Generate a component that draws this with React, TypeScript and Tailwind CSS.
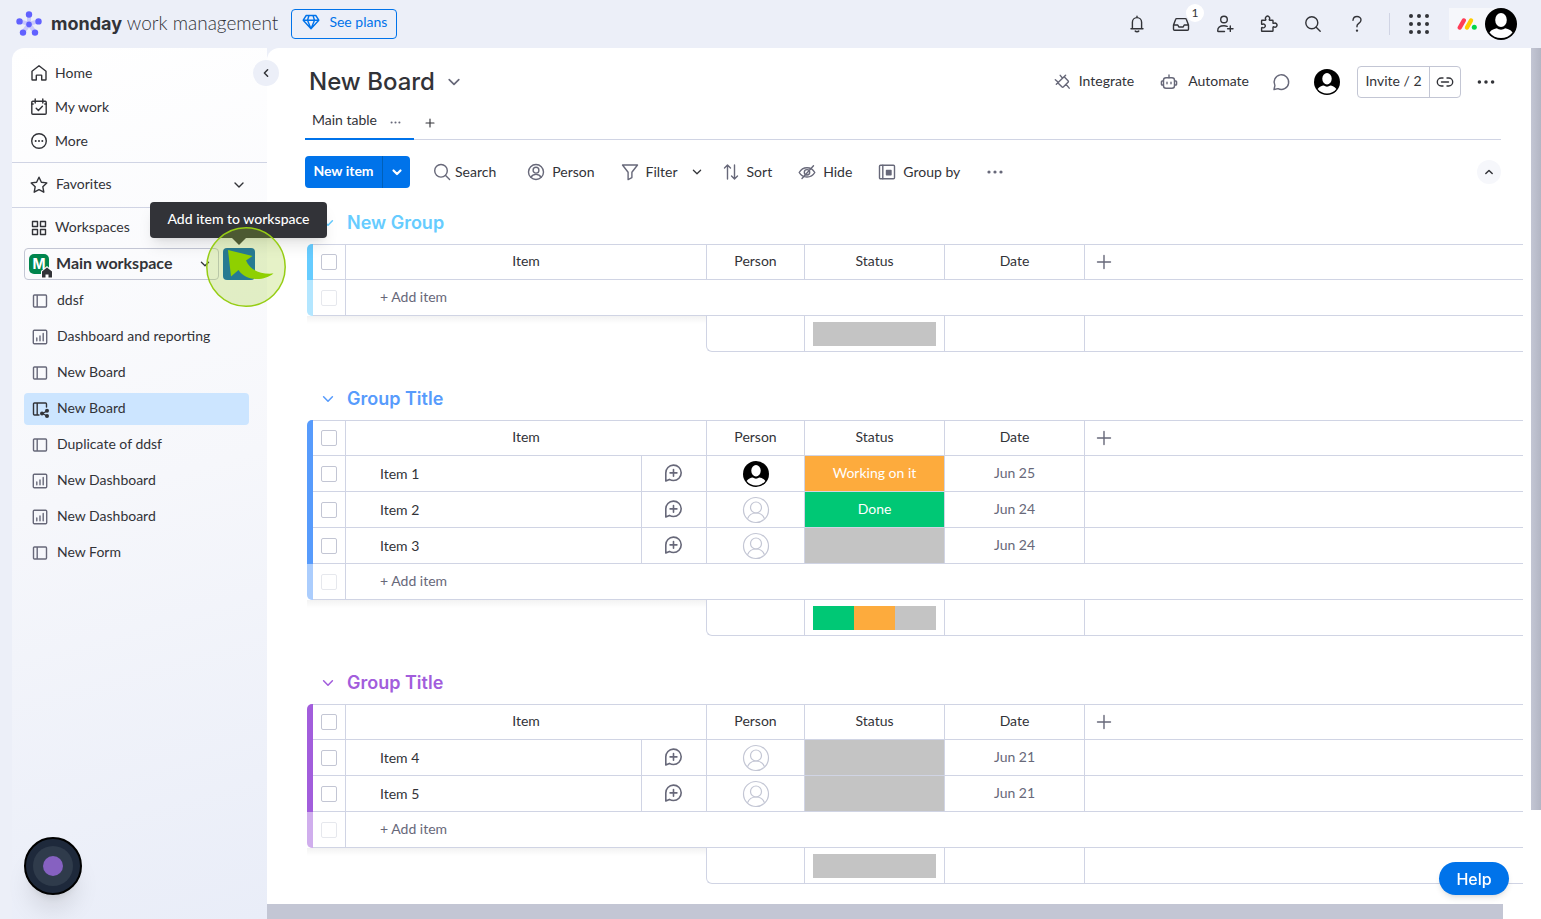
import React, { useState } from 'react';

type IconProps = { className?: string; children?: React.ReactNode };

const Icon = ({ className = 'size-5', children }: IconProps) => (
  <svg viewBox="0 0 20 20" fill="none" stroke="currentColor" strokeWidth="1.4" strokeLinecap="round" strokeLinejoin="round" className={`shrink-0 ${className}`} aria-hidden="true">
    {children}
  </svg>
);

const HomeIcon = () => (
  <Icon>
    <path d="M3 8.2 10 2.8l7 5.4v8.3c0 .3-.2.5-.5.5h-3.800v-4.400c0-.3-.2-.5-.5-.5H7.800c-.3 0-.5.2-.5.5V17H3.500a.5.5 0 0 1-.5-.5z" />
  </Icon>
);

const MyWorkIcon = () => (
  <Icon>
    <rect x="2.8" y="4.2" width="14.4" height="13" rx="1" />
    <path d="M6.2 2v4M13.8 2v4M2.8 7h1.4M15.8 7h1.4M7.2 11.2l2.2 2.2 4-4.2" />
  </Icon>
);

const MoreIcon = () => (
  <Icon>
    <circle cx="10" cy="10" r="7.3" />
    <g fill="currentColor" stroke="none">
      <circle cx="6.7" cy="10" r="1" />
      <circle cx="10" cy="10" r="1" />
      <circle cx="13.3" cy="10" r="1" />
    </g>
  </Icon>
);

const StarIcon = () => (
  <Icon>
    <path d="m10 2.2 2.4 5 5.4.7-4 3.8 1 5.5L10 14.6l-4.8 2.6 1-5.5-4-3.8 5.4-.7z" />
  </Icon>
);

const WorkspacesIcon = () => (
  <Icon>
    <path d="M3.5 3.5h5v5h-5zM11.5 3.5h5v5h-5zM3.5 11.5h5v5h-5zM11.5 11.5h5v5h-5z" />
  </Icon>
);

const ChevronDown = ({ className = 'size-5' }: IconProps) => (
  <Icon className={className}>
    <path d="m6 8 4 4 4-4" />
  </Icon>
);

const BoardIcon = () => (
  <Icon className="size-5 text-[#676879]">
    <path d="M4.4 4h11.2a.9.9 0 0 1 .9.9v10.2a.9.9 0 0 1-.9.9H4.4a.9.9 0 0 1-.9-.9V4.9a.9.9 0 0 1 .9-.9zM7.2 4v12" />
  </Icon>
);

const SharedBoardIcon = () => (
  <Icon className="size-5 text-[#323338]">
    <path d="M9 16H4.4a.9.9 0 0 1-.9-.9V4.9a.9.9 0 0 1 .9-.9h11.2a.9.9 0 0 1 .9.9V8M7.2 4v12M17 12l-4.5 2.5 4.5 2.5" />
    <g fill="currentColor" stroke="none">
      <circle cx="12" cy="14.5" r="2" />
      <circle cx="17" cy="11.8" r="2" />
      <circle cx="17" cy="17" r="2" />
    </g>
  </Icon>
);

const DashboardIcon = () => (
  <Icon className="size-5 text-[#676879]">
    <rect x="3.3" y="3.3" width="13.4" height="13.4" rx="1" />
    <path d="M6.8 11v2.7M10 9v4.7M13.2 6.5v7.2" />
  </Icon>
);

const DotsIcon = ({ className = 'size-5' }: IconProps) => (
  <Icon className={className}>
    <g fill="currentColor" stroke="none">
      <circle cx="4" cy="10" r="1.6" />
      <circle cx="10" cy="10" r="1.6" />
      <circle cx="16" cy="10" r="1.6" />
    </g>
  </Icon>
);

const SearchIcon = ({ className = 'size-5' }: IconProps) => (
  <Icon className={className}>
    <circle cx="9" cy="8.8" r="6.3" />
    <path d="m13.6 13.4 4 4" />
  </Icon>
);

const Avatar = ({ className = 'size-[26px]' }: IconProps) => (
  <svg viewBox="0 0 32 32" className={`shrink-0 ${className}`} aria-hidden="true">
    <circle cx="16" cy="16" r="16" fill="#000" />
    <ellipse cx="16" cy="12" rx="5.8" ry="7" fill="#fff" />
    <path d="M4.5 24.5C6.5 21.5 9.5 20.8 12 20.3c1.2 1 2.6 1.4 4 1.4s2.8-.4 4-1.4c2.5.5 5.5 1.2 7.5 4.2a14.6 14.6 0 0 1-23 0z" fill="#fff" />
  </svg>
);

const EmptyPerson = () => (
  <svg viewBox="0 0 28 28" fill="none" stroke="#c3c6d4" strokeWidth="1.2" className="size-7" aria-hidden="true">
    <circle cx="14" cy="14" r="12.5" />
    <circle cx="14" cy="11.5" r="5.5" />
    <path d="M5.5 22.8c1.5-3.8 4.5-5.8 8.5-5.8s7 2 8.5 5.8" />
  </svg>
);

const ChatPlusIcon = () => (
  <Icon className="size-5 text-[#676879]">
    <path d="M1.8 17V9A7.7 7.7 0 1 1 9.500 16.500c-1.500 0-2.900-.4-4.100-1.100zM9.500 5.500v6.800M6.100 8.900h6.800" strokeWidth="1.6" />
  </Icon>
);

const ChatIcon = () => (
  <Icon className="size-5 text-[#676879]">
    <path d="M3 17.500l.9-4A7.300 7.300 0 1 1 7 16.600z" />
  </Icon>
);

const sidebarLinks = [
  { label: 'Home', icon: <HomeIcon /> },
  { label: 'My work', icon: <MyWorkIcon /> },
  { label: 'More', icon: <MoreIcon /> },
];

const boards = [
  { label: 'ddsf', icon: <BoardIcon /> },
  { label: 'Dashboard and reporting', icon: <DashboardIcon /> },
  { label: 'New Board', icon: <BoardIcon /> },
  { label: 'New Board', icon: <SharedBoardIcon />, active: true },
  { label: 'Duplicate of ddsf', icon: <BoardIcon /> },
  { label: 'New Dashboard', icon: <DashboardIcon /> },
  { label: 'New Dashboard', icon: <DashboardIcon /> },
  { label: 'New Form', icon: <BoardIcon /> },
];

const headerActions = [
  {
    label: 'Notifications',
    icon: <path d="M4 14.8h12M5.4 14.8V8.2a4.6 4.6 0 0 1 9.2 0v6.6M10 2.2v1.4M8.2 17c.4.6 1 .8 1.8.8s1.4-.2 1.8-.8" />,
  },
  {
    label: 'Inbox',
    icon: <path d="M2.5 11v4.2c0 .6.4 1 1 1h13c.6 0 1-.4 1-1V11l-2.200-5.700a1 1 0 0 0-1-.7H5.700a1 1 0 0 0-1 .7zM2.500 11h4.300l1 2h4.400l1-2h4.300" />,
    badge: '1',
  },
  {
    label: 'Invite members',
    icon: (
      <>
        <circle cx="9" cy="5.5" r="3.3" />
        <path d="M9.5 17.5H3.5c-.5 0-.8-.3-.8-.8 0-3 2.6-4.9 6.3-4.9 1.2 0 2.2.2 3.2.6M15.3 12v5.4M12.6 14.7H18" />
      </>
    ),
  },
  {
    label: 'Apps',
    icon: <path d="M3 6.2h3.3c.5 0 .6-.4.5-.8a2.1 2.1 0 1 1 3.5 0c-.1.5 0 .8.5.8h2.6c.4 0 .6.2.6.6v2.1c0 .5.4.6.8.4a2.1 2.1 0 1 1 0 3.600c-.4-.2-.8 0-.8.4v3.4c0 .4-.2.6-.6.6H3.200c-.4 0-.6-.2-.6-.6V14c0-.4.300-.6.700-.5a1.900 1.900 0 1 0 0-3.200c-.4.200-.7 0-.7-.4V6.700c0-.3.200-.5.400-.5z" />,
  },
  {
    label: 'Search everything',
    icon: (
      <>
        <circle cx="8.8" cy="8.8" r="6" />
        <path d="m13.2 13.2 4 4" />
      </>
    ),
  },
  {
    label: 'Get help',
    icon: (
      <>
        <path d="M6 6.2c.2-2.3 1.8-3.7 4-3.7s4 1.5 4 3.5c0 1.7-1 2.5-2.2 3.3C10.7 10 10 10.7 10 12v.8" />
        <circle cx="10" cy="16.6" r=".5" fill="currentColor" />
      </>
    ),
  },
];

const TopBar = () => (
  <header className="flex h-12 shrink-0 items-center pl-4 pr-6">
    <a href="#" className="flex items-center gap-[9px] text-[19px] leading-8">
      <svg viewBox="0 0 26 26" className="size-[26px]" aria-hidden="true">
        <path d="M13 13V3.5M13 13l9.5-2.8M13 13l6 8.5M13 13l-6 8.5M13 13 3.5 10.2" stroke="#c9c9fb" strokeWidth="4" strokeLinecap="round" />
        <g fill="#6161ff">
          <circle cx="13" cy="3.5" r="3.2" />
          <circle cx="22.5" cy="10.4" r="3.2" />
          <circle cx="19" cy="21.6" r="3.2" />
          <circle cx="7" cy="21.6" r="3.2" />
          <circle cx="3.5" cy="10.4" r="3.2" />
          <circle cx="13" cy="13.4" r="2.8" />
        </g>
      </svg>
      <span className="whitespace-nowrap pb-0.5 font-light">
        <b className="font-['Inter',sans-serif] text-[18px] font-bold">monday</b> work management
      </span>
    </a>
    <button className="ml-[13px] flex h-[30px] w-[106px] items-center justify-center gap-2 rounded-sm border border-[#0073ea] pb-1 text-[#0073ea]">
      <Icon className="size-5">
        <path d="M5.2 3.5h9.6l3 4.7L10 16.8 2.2 8.2zM2.2 8.2h15.6M10 16.8 6.5 8.2l1.500-4.700M10 16.800l3.500-8.600L12 3.500" />
      </Icon>
      See plans
    </button>
    <div className="ml-auto flex items-center">
      {headerActions.map((action) => (
        <button key={action.label} aria-label={action.label} className="relative flex h-8 w-11 items-center justify-center">
          <Icon>{action.icon}</Icon>
          {action.badge && (
            <span className="absolute -top-1 -right-px flex size-[18px] items-center justify-center rounded-full bg-white text-[12px] leading-none">{action.badge}</span>
          )}
        </button>
      ))}
      <span className="ml-2.5 h-[22px] w-px bg-[#d0d4e4]" />
      <button aria-label="Switch product" className="ml-[15px] flex size-7 items-center justify-center">
        <svg viewBox="0 0 20 20" className="size-5" fill="#323338" aria-hidden="true">
          {[2, 10, 18].map((y) => [2, 10, 18].map((x) => <circle key={`${x}-${y}`} cx={x} cy={y} r="2" />))}
        </svg>
      </button>
      <button aria-label="Profile" className="ml-4 flex h-8 items-center gap-2 rounded-l-sm rounded-r-full bg-[#f6f7fb] pl-2">
        <svg viewBox="0 0 20 14" className="h-3.5 w-5" strokeWidth="4.4" strokeLinecap="round" aria-hidden="true">
          <path d="m2.800 10.500 4-7" stroke="#ff3d57" />
          <path d="m10 10.500 4-7" stroke="#ffcb00" />
          <circle cx="17.3" cy="10.3" r="2.5" fill="#00d647" />
        </svg>
        <Avatar className="size-8" />
      </button>
    </div>
  </header>
);

const ClickMarker = () => (
  <svg viewBox="0 0 80 80" className="pointer-events-none absolute -left-[17px] -top-[21px] z-30 size-20 max-w-none" aria-hidden="true">
    <circle cx="40" cy="40" r="39.2" fill="#9bcd1e" fillOpacity=".25" stroke="#96cd14" strokeWidth="1.5" />
    <path d="M22 23l24.5 6-6.5 4.5c4 9 13 14 27.5 13-9 7.5-27 8.5-35-3.5L25 49.500z" fill="#8fd000" />
  </svg>
);

const Sidebar = () => (
  <nav className="relative z-10 ml-3 flex w-[255px] shrink-0 flex-col rounded-tl-[12px] bg-linear-165 from-white via-[#f6f7fb] to-[#e9edf8]">
    <button aria-label="Collapse navigation" className="absolute -right-3 top-3 flex size-[26px] items-center justify-center rounded-full bg-[#eceff8]">
      <Icon className="size-4">
        <path d="m12 6-4 4 4 4" strokeWidth="1.9" />
      </Icon>
    </button>

    <ul className="border-b border-[#d0d4e4] pb-1 pl-[17px] pt-2">
      {sidebarLinks.map((link) => (
        <li key={link.label}>
          <a href="#" className="flex h-[34px] items-center gap-1.5">
            {link.icon}
            {link.label}
          </a>
        </li>
      ))}
    </ul>

    <button className="flex h-[45px] items-center gap-[7px] border-b border-[#d0d4e4] pl-[17px] pr-[18px]">
      <StarIcon />
      <span className="pb-0.5">Favorites</span>
      <ChevronDown className="ml-auto size-5" />
    </button>

    <div className="flex h-10 items-center gap-1.5 pl-[17px]">
      <WorkspacesIcon />
      <span className="pb-0.5">Workspaces</span>
    </div>

    <div className="flex gap-1 px-3">
      <button className="flex h-8 w-[195px] items-center rounded-sm border border-[#c3c6d4] pl-1 pr-1">
        <span className="relative flex size-5 items-center justify-center rounded-[5px] bg-[#00854d] font-['Inter',sans-serif] text-[14px] font-bold text-white">
          M
          <svg viewBox="0 0 12 12" className="absolute -bottom-1 -right-1 size-3" aria-hidden="true">
            <path d="M6 0 12 5v7H0V5z" fill="#fff" />
            <path d="M6 1.5 11 5.5V11.5H7.5V8.5h-3v3H1v-6z" fill="#323338" />
          </svg>
        </span>
        <span className="ml-[7px] pb-0.5 text-[16px] font-bold">Main workspace</span>
        <ChevronDown className="ml-auto size-[18px]" />
      </button>
      <div className="relative">
        <button aria-label="Add item to workspace" className="flex size-8 items-center justify-center rounded-sm bg-[#0060b9]" />
        <div role="tooltip" className="absolute -left-[73px] -top-[46px] z-20 flex h-9 w-[177px] items-center justify-center whitespace-nowrap rounded-sm bg-[#323338] pb-0.5 font-medium text-white shadow-lg">
          Add item to workspace
          <svg viewBox="0 0 14 7" className="absolute left-[82px] top-9 h-[7px] w-3.5" aria-hidden="true">
            <path d="M0 0h14L7 7z" fill="#323338" />
          </svg>
        </div>
        <ClickMarker />
      </div>
    </div>

    <ul className="flex flex-col gap-1 pl-3 pr-[18px] pt-[5px]">
      {boards.map((board, i) => (
        <li key={i}>
          <a href="#" className={`flex h-8 items-center gap-[7px] rounded-sm pl-1.5 ${board.active ? 'bg-[#cce5ff]' : ''}`}>
            {board.icon}
            <span className="pb-0.5">{board.label}</span>
          </a>
        </li>
      ))}
    </ul>
  </nav>
);

const toolbar = [
  {
    label: 'Person',
    icon: (
      <>
        <circle cx="10" cy="10" r="7.5" />
        <circle cx="10" cy="8.2" r="2.9" />
        <path d="M5 15.3c1-2 2.7-2.9 5-2.9s4 .9 5 2.9" />
      </>
    ),
  },
  { label: 'Filter', icon: <path d="M2.5 3h15l-5.6 7.3v5.3l-3.800 2V10.300z" />, menu: true },
  { label: 'Sort', icon: <path d="M6.5 17V3.2M3.5 6l3-3 3 3M13.5 3v13.8M10.5 14l3 3 3-3" /> },
  {
    label: 'Hide',
    icon: (
      <>
        <path d="M2.2 10.5c1.8-3.2 4.5-4.8 7.8-4.8s6 1.6 7.8 4.8c-1.8 3-4.5 4.5-7.8 4.5s-6-1.5-7.8-4.5z" />
        <circle cx="10" cy="10.3" r="2.7" />
        <path d="M5 16.5 16.5 3.8" />
      </>
    ),
  },
  {
    label: 'Group by',
    icon: (
      <>
        <rect x="2.5" y="3.2" width="15" height="13.5" rx="1" />
        <path d="M5.8 3.2v13.5" />
        <path d="M9.5 8.5H14v4.3H9.5z" fill="currentColor" />
      </>
    ),
  },
];

const BoardHeader = () => (
  <div className="pl-[38px] pr-[30px]">
    <div className="flex h-[68px] items-center pl-1">
      <h1 className="font-['Inter',sans-serif] text-[24px] font-medium leading-8">New Board</h1>
      <button aria-label="Board menu" className="ml-[7px]">
        <ChevronDown className="size-6 text-[#676879]" />
      </button>
      <div className="ml-auto flex items-center">
        <button className="flex items-center gap-2">
          <Icon className="size-[18px] text-[#676879]">
            <path d="M14 2.6 3.700 12.600M8 2.600l2.700 3.200M2.600 7.400 5.800 10.300M12.400 4.200l4.300 4.300c.6.600.6 1.300 0 1.900l-5 5c-.6.600-1.300.6-1.900 0l-4.500-4.500M14.600 12.600l3.400 4.200" strokeWidth="1.6" />
          </Icon>
          <span className="pb-0.5">Integrate</span>
        </button>
        <button className="ml-[25px] flex items-center gap-[9px]">
          <Icon className="size-5 text-[#676879]">
            <rect x="4.5" y="5.8" width="11" height="10.5" rx="2.5" />
            <path d="M10 3v2.8M4.5 9H3.2c-.5 0-.8.3-.8.8v2.4c0 .5.3.8.8.8h1.3M15.5 9h1.3c.5 0 .8.3.8.8v2.4c0 .5-.3.8-.8.8h-1.3M8 10.2v1.600M12 10.200v1.600" />
          </Icon>
          <span className="pb-0.5">Automate</span>
        </button>
        <button aria-label="Discussion" className="ml-[22px]">
          <ChatIcon />
        </button>
        <button aria-label="Board owner" className="ml-[23px]">
          <Avatar />
        </button>
        <div className="ml-[17px] flex h-8 rounded-sm border border-[#c3c6d4]">
          <button className="w-[72px] border-r border-[#c3c6d4] pb-0.5">Invite / 2</button>
          <button aria-label="Copy link" className="flex w-[30px] items-center justify-center">
            <Icon>
              <path d="M8 6H6.3a4 4 0 0 0 0 8H8M12 6h1.7a4 4 0 0 1 0 8H12M6.5 10h7" />
            </Icon>
          </button>
        </div>
        <button aria-label="More options" className="ml-3.5 mr-1">
          <DotsIcon className="size-[22px]" />
        </button>
      </div>
    </div>

    <div className="flex h-6 border-b border-[#d0d4e4]">
      <div className="-mb-px flex w-[109px] items-start border-b-2 border-[#0073ea] pl-[7px]">
        <button className="leading-2">Main table</button>
        <button aria-label="View options" className="ml-3 leading-none">
          <DotsIcon className="size-[13px] text-[#676879]" />
        </button>
      </div>
      <button aria-label="Add view" className="ml-2 flex h-3.5 items-center">
        <Icon className="size-4">
          <path d="M10 5v10M5 10h10" />
        </Icon>
      </button>
    </div>

    <div className="mt-4 flex h-8 items-center">
      <div className="flex h-8 rounded-sm bg-[#0073ea] text-white">
        <button className="w-[77px] pb-0.5 font-bold">New item</button>
        <button aria-label="New item options" className="flex w-7 items-center justify-center border-l border-[#0060b9]">
          <Icon className="size-5">
            <path d="m6.5 8.5 3.5 3.5 3.5-3.5" strokeWidth="2.2" />
          </Icon>
        </button>
      </div>
      <button className="ml-[22px] flex items-center gap-[3px]">
        <SearchIcon className="size-5 text-[#676879]" />
        Search
      </button>
      <div className="ml-[30px] flex items-center gap-[25px]">
        {toolbar.map((tool) => (
          <button key={tool.label} className="flex items-center gap-1.5">
            <Icon className="size-5 text-[#676879]">{tool.icon}</Icon>
            {tool.label}
            {tool.menu && <ChevronDown className="-mr-2.5 ml-1 size-[18px]" />}
          </button>
        ))}
        <button aria-label="More tools">
          <DotsIcon className="size-5 text-[#676879]" />
        </button>
      </div>
      <button aria-label="Collapse header" className="ml-auto flex size-6 items-center justify-center rounded-full bg-[#f6f7fb]">
        <Icon className="size-4">
          <path d="m6 12 4-4 4 4" strokeWidth="1.8" />
        </Icon>
      </button>
    </div>
  </div>
);

type Item = { name: string; assigned?: boolean; status?: string; date: string };
type Group = { title: string; text: string; bar: string; faded: string; items: Item[]; summary: string[] };

const groups: Group[] = [
  { title: 'New Group', text: 'text-[#66ccff]', bar: 'bg-[#66ccff]', faded: 'bg-[#b3e6ff]', items: [], summary: ['bg-[#c4c4c4]'] },
  {
    title: 'Group Title',
    text: 'text-[#579bfc]',
    bar: 'bg-[#579bfc]',
    faded: 'bg-[#abcdfd]',
    items: [
      { name: 'Item 1', assigned: true, status: 'Working on it', date: 'Jun 25' },
      { name: 'Item 2', status: 'Done', date: 'Jun 24' },
      { name: 'Item 3', date: 'Jun 24' },
    ],
    summary: ['bg-[#00c875]', 'bg-[#fdab3d]', 'bg-[#c4c4c4]'],
  },
  {
    title: 'Group Title',
    text: 'text-[#a25ddc]',
    bar: 'bg-[#a25ddc]',
    faded: 'bg-[#d0aeed]',
    items: [
      { name: 'Item 4', date: 'Jun 21' },
      { name: 'Item 5', date: 'Jun 21' },
    ],
    summary: ['bg-[#c4c4c4]'],
  },
];

const statusColor = (status?: string) => {
  if (status === 'Working on it') return 'bg-[#fdab3d]';
  if (status === 'Done') return 'bg-[#00c875]';
  return 'bg-[#c4c4c4]';
};

const cell = 'border-b border-l border-[#d0d4e4] p-0';
const headCell = `${cell} border-t pb-0.5 font-normal`;

const Checkbox = ({ label, disabled }: { label: string; disabled?: boolean }) => (
  <input
    type="checkbox"
    aria-label={label}
    disabled={disabled}
    className="mx-auto block size-4 appearance-none rounded-xs border border-[#c3c6d4] bg-white checked:bg-[#0073ea] disabled:opacity-40"
  />
);

const GroupTable = ({ group }: { group: Group }) => {
  const [open, setOpen] = useState(true);

  return (
    <section className="mb-[31px]">
      <div className={`mb-[5px] flex h-8 items-center pl-2.5 ${group.text}`}>
        <button aria-label="Toggle group" onClick={() => setOpen(!open)}>
          <ChevronDown className="size-[22px]" />
        </button>
        <h2 className="ml-2 font-['Inter',sans-serif] text-[18px] font-semibold">{group.title}</h2>
      </div>
      {open && (
        <table className="w-full table-fixed border-separate border-spacing-0">
          <colgroup>
            <col className="w-1.5" />
            <col className="w-8" />
            <col className="w-[296px]" />
            <col className="w-[65px]" />
            <col className="w-[98px]" />
            <col className="w-[140px]" />
            <col className="w-[140px]" />
            <col />
          </colgroup>
          <thead>
            <tr className="h-9">
              <th className={`rounded-tl-[5px] p-0 ${group.bar}`} />
              <th className="border-y border-[#d0d4e4] p-0">
                <Checkbox label={`Select all in ${group.title}`} />
              </th>
              <th colSpan={2} className={headCell}>Item</th>
              <th className={headCell}>Person</th>
              <th className={headCell}>Status</th>
              <th className={headCell}>Date</th>
              <th className={`${cell} border-t pl-[9px]`}>
                <button aria-label="Add column" className="block text-[#676879]">
                  <Icon>
                    <path d="M10 3.5v13M3.5 10h13" />
                  </Icon>
                </button>
              </th>
            </tr>
          </thead>
          <tbody>
            {group.items.map((item) => (
              <tr key={item.name} className="h-9">
                <td className={`p-0 ${group.bar}`} />
                <td className="border-b border-[#d0d4e4] p-0">
                  <Checkbox label={`Select ${item.name}`} />
                </td>
                <td className={`${cell} pl-[34px]`}>{item.name}</td>
                <td className={cell}>
                  <button aria-label={`Start a conversation on ${item.name}`} className="mx-auto block">
                    <ChatPlusIcon />
                  </button>
                </td>
                <td className={cell}>
                  <div className="flex justify-center">{item.assigned ? <Avatar /> : <EmptyPerson />}</div>
                </td>
                <td className={`${cell} pb-0.5 text-center text-white ${statusColor(item.status)}`}>{item.status}</td>
                <td className={`${cell} pb-0.5 text-center text-[#676879]`}>{item.date}</td>
                <td className={cell} />
              </tr>
            ))}
            <tr className="h-9">
              <td className={`rounded-bl-[5px] p-0 ${group.faded}`} />
              <td className="border-b border-[#d0d4e4] p-0">
                <Checkbox label="New item" disabled />
              </td>
              <td colSpan={6} className={`${cell} pb-0.5 pl-[34px]`}>
                <button className="text-[#676879]">+ Add item</button>
              </td>
            </tr>
            <tr className="h-9">
              <td colSpan={4} className="p-0 align-top">
                <div className="h-2 bg-linear-to-b from-black/5 to-transparent" />
              </td>
              <td className={`${cell} rounded-bl-md`} />
              <td className={`${cell} px-2`}>
                <div className="flex h-6">
                  {group.summary.map((color) => (
                    <span key={color} className={`flex-1 ${color}`} />
                  ))}
                </div>
              </td>
              <td className={cell} />
              <td className={cell} />
            </tr>
          </tbody>
        </table>
      )}
    </section>
  );
};

export default function App() {
  return (
    <div className="flex h-screen flex-col overflow-hidden bg-[#eceff8] font-['Lato',sans-serif] text-[14px] leading-5 text-[#323338]">
      <TopBar />
      <div className="flex min-h-0 flex-1">
        <Sidebar />
        <main className="flex min-w-0 flex-1 flex-col rounded-tl-[12px] bg-white">
          <div className="flex min-h-0 flex-1">
            <div className="min-w-0 flex-1 overflow-hidden">
              <BoardHeader />
              <div className="mt-[19px] pl-10 pr-2">
                {groups.map((group, i) => (
                  <GroupTable key={i} group={group} />
                ))}
              </div>
            </div>
            <div className="w-2.5">
              <div className="h-[89%] bg-linear-to-r from-[#c3c6d4] to-[#b3b6c4]" />
            </div>
          </div>
          <div className="h-[15px] w-[97%] bg-[#c3c6d4]" />
        </main>
      </div>

      <button aria-label="Record" className="fixed bottom-6 left-6 z-20 flex size-[58px] items-center justify-center rounded-full border-2 border-black bg-[#1e293b] shadow-xl">
        <span className="flex size-10 items-center justify-center rounded-full bg-[#2f3b4b]">
          <span className="size-5 rounded-full bg-[#8661c1]" />
        </span>
      </button>
      <button className="fixed bottom-6 right-8 z-20 h-[33px] w-[70px] rounded-full bg-[#0073ea] font-['Inter',sans-serif] text-[16px] font-medium text-white shadow-md">
        Help
      </button>
    </div>
  );
}
